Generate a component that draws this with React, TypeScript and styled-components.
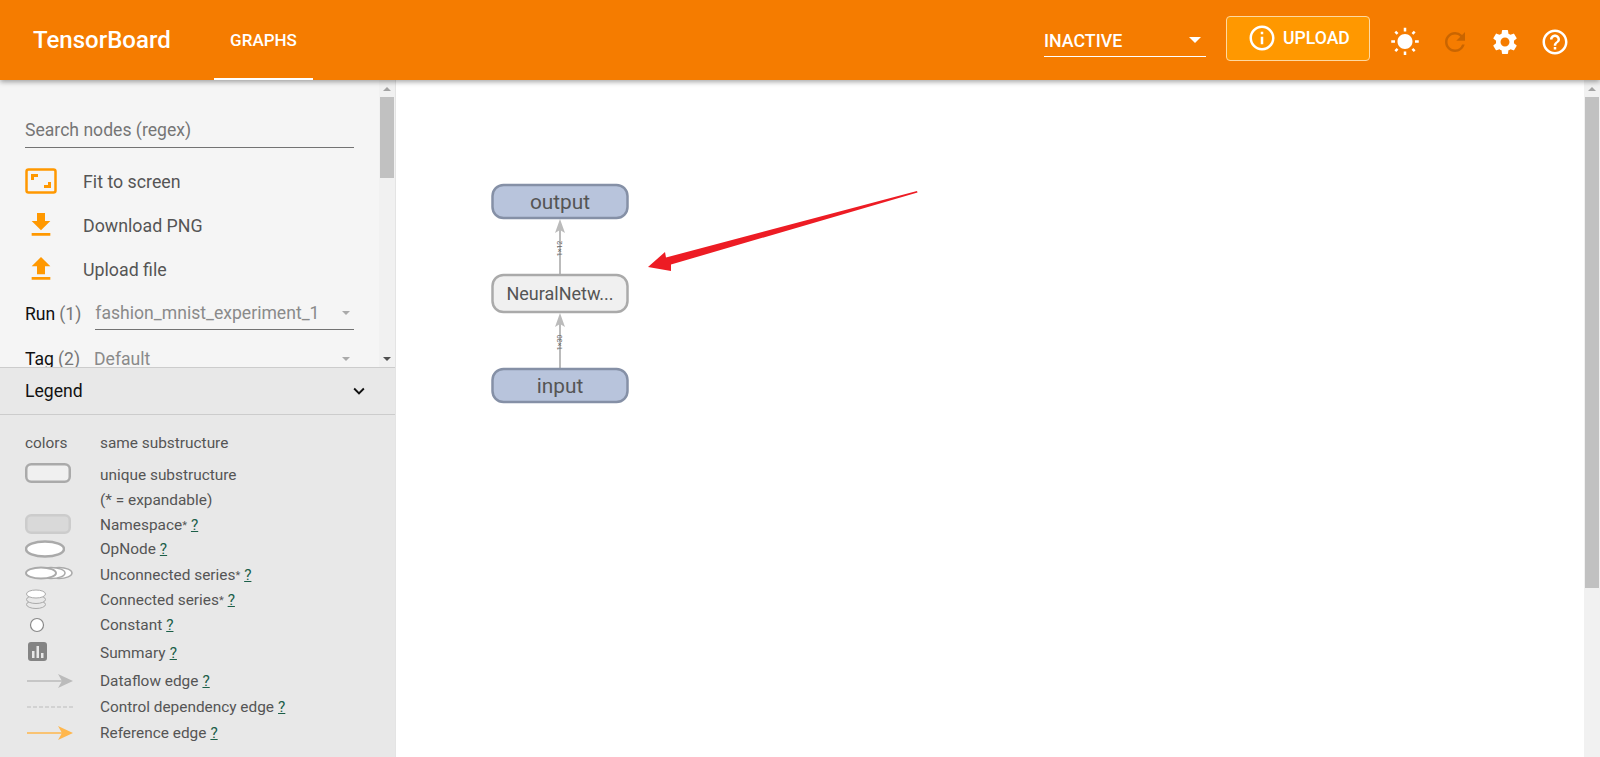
import React from 'react';
import styled, { createGlobalStyle } from 'styled-components';
import {
  MdFileDownload,
  MdFileUpload,
  MdHelpOutline,
  MdInfoOutline,
  MdKeyboardArrowDown,
  MdRefresh,
  MdSettings,
  MdWbSunny,
} from 'react-icons/md';

const GlobalStyle = createGlobalStyle`
  html, body {
    margin: 0;
    height: 100%;
    overflow: hidden;
    background: #fff;
    font-family: Roboto, "Liberation Sans", sans-serif;
  }
`;

const Page = styled.div`
  display: flex;
  flex-direction: column;
  height: 757px;
`;

const Header = styled.header`
  position: relative;
  z-index: 2;
  display: flex;
  align-items: stretch;
  flex: none;
  height: 80px;
  padding-left: 33px;
  background: #f57c00;
  color: #fff;
  box-shadow: 0 2px 5px rgba(0, 0, 0, 0.35);
`;

const Title = styled.div`
  width: 181px;
  font-size: 24px;
  font-weight: 500;
  line-height: 80px;
`;

const Tab = styled.div`
  box-sizing: border-box;
  width: 99px;
  padding-top: 30px;
  border-bottom: 2px solid #fff;
  font-size: 17px;
  font-weight: 500;
  line-height: 20px;
  text-align: center;
`;

const HeaderRight = styled.div`
  display: flex;
  align-items: center;
  margin-left: auto;
  padding-right: 20px;
`;

const RunSelect = styled.div`
  box-sizing: border-box;
  display: flex;
  align-items: center;
  justify-content: space-between;
  width: 162px;
  height: 32px;
  margin: 1px 20px 0 0;
  padding-right: 5px;
  border-bottom: 1px solid #fff;
  font-size: 17.800px;
  font-weight: 500;
`;

const Caret = styled.span<{ $color: string; $size: number }>`
  width: 0;
  height: 0;
  border-left: ${(p) => p.$size}px solid transparent;
  border-right: ${(p) => p.$size}px solid transparent;
  border-top: ${(p) => p.$size}px solid ${(p) => p.$color};
`;

const UploadButton = styled.div`
  box-sizing: border-box;
  display: flex;
  align-items: center;
  gap: 6px;
  width: 144px;
  height: 45px;
  margin: 0 10px 4px 0;
  padding-left: 20px;
  border: 1px solid #ffd9a0;
  border-radius: 4px;
  background: #ff9800;
  font-size: 17.600px;
  font-weight: 500;
`;

const HeaderIcon = styled.span<{ $dim?: boolean }>`
  display: flex;
  justify-content: center;
  width: 50px;
  padding-top: 4px;
  color: ${(p) => (p.$dim ? '#c96500' : '#fff')};
`;

const Body = styled.div`
  display: flex;
  flex: 1;
  min-height: 0;
`;

const Sidebar = styled.aside`
  display: flex;
  flex-direction: column;
  flex: none;
  width: 395px;
  border-right: 1px solid #e4e4e4;
`;

const Controls = styled.div`
  display: flex;
  flex: none;
  height: 287px;
  background: #f5f5f5;
  overflow: hidden;
`;

const ControlsInner = styled.div`
  flex: 1;
  padding: 30px 25px 0;
`;

const Search = styled.div`
  box-sizing: border-box;
  height: 38px;
  padding-top: 9px;
  border-bottom: 1px solid #737373;
  color: #757575;
  font-size: 17.600px;
  line-height: 22px;
`;

const Action = styled.div`
  display: flex;
  align-items: center;
  height: 44px;
  color: #555;
  font-size: 17.800px;
`;

const ActionIcon = styled.span`
  display: flex;
  justify-content: center;
  flex: none;
  width: 32px;
  margin-right: 26px;
  color: #ff9800;
`;

const Actions = styled.div`
  margin-top: 11px;
`;

const SelectRow = styled.div`
  display: flex;
  align-items: center;
  height: 45px;
  font-size: 17.600px;
  color: #111;
`;

const Count = styled.span`
  margin-left: 4px;
  color: #777;
`;

const SelectValue = styled.div<{ $line?: boolean }>`
  box-sizing: border-box;
  display: flex;
  align-items: center;
  justify-content: space-between;
  flex: 1;
  height: 33px;
  margin-left: 14px;
  padding-right: 4px;
  border-bottom: ${(p) => (p.$line ? '1px solid #737373' : 'none')};
  color: #8a8a8a;
`;

const Scrollbar = styled.div`
  display: flex;
  flex-direction: column;
  align-items: center;
  flex: none;
  box-sizing: border-box;
  width: 16px;
  height: 100%;
  padding: 7px 1px 6px;
  background: #f1f1f1;
`;

const Thumb = styled.div<{ $height: number }>`
  flex: none;
  width: 14px;
  height: ${(p) => p.$height}px;
  margin-top: 6px;
  background: #c1c1c1;
`;

const ScrollUp = styled.span`
  flex: none;
  width: 0;
  height: 0;
  border-left: 4px solid transparent;
  border-right: 4px solid transparent;
  border-bottom: 4px solid #a3a3a3;
`;

const ScrollDown = styled.span`
  flex: none;
  width: 0;
  height: 0;
  margin-top: auto;
  border-left: 4px solid transparent;
  border-right: 4px solid transparent;
  border-top: 4px solid #505050;
`;

const LegendHeader = styled.div`
  box-sizing: border-box;
  display: flex;
  align-items: center;
  justify-content: space-between;
  flex: none;
  height: 48px;
  padding: 0 25px;
  border-top: 1px solid #ccc;
  border-bottom: 1px solid #ccc;
  background: #e8e8e8;
  color: #111;
  font-size: 17.600px;
`;

const LegendBody = styled.div`
  flex: 1;
  padding-top: 16px;
  background: #e8e8e8;
`;

const LegendRow = styled.div<{ $extra?: number }>`
  display: flex;
  align-items: center;
  height: 24px;
  margin-bottom: ${(p) => p.$extra ?? 0}px;
  padding-left: 25px;
  color: #555;
  font-size: 15.400px;
  white-space: nowrap;
`;

const LegendIcon = styled.span<{ $lift?: number }>`
  box-sizing: border-box;
  display: flex;
  align-items: center;
  flex: none;
  width: 75px;
  height: 24px;
  padding-bottom: ${(p) => (p.$lift ?? 0) * 2}px;
`;

const Star = styled.span`
  font-size: 11px;
`;

const HelpLink = styled.span`
  margin-left: 4px;
  color: #1b5e48;
  text-decoration: underline;
`;

const Main = styled.main`
  position: relative;
  display: flex;
  flex: 1;
  justify-content: flex-end;
  min-width: 0;
  background: #fff;
`;

const GraphSvg = styled.svg`
  position: absolute;
  top: 0;
  left: 0;
`;

const NodeLabel = styled.text<{ $size: number }>`
  fill: #555;
  font-family: Roboto, sans-serif;
  font-size: ${(p) => p.$size}px;
  text-anchor: middle;
`;

const EdgeLabel = styled.text`
  fill: #666;
  font-family: Roboto, sans-serif;
  font-size: 7px;
  text-anchor: middle;
`;

const GraphNode = ({ y, h, label, meta }: { y: number; h: number; label: string; meta?: boolean }) => (
  <g>
    <rect
      x="96.500"
      y={y}
      width="135"
      height={h}
      rx="11"
      fill={meta ? '#b8c4dc' : '#f0f0f0'}
      stroke={meta ? '#8590a6' : '#aaa'}
      strokeWidth="2.500"
    />
    <NodeLabel $size={meta ? 20.8 : 18} x="164" y={y + h / 2 + (meta ? 7 : 6)}>{label}</NodeLabel>
  </g>
);

const GraphEdge = ({ y1, y2, label }: { y1: number; y2: number; label: string }) => (
  <g>
    <line x1="164" y1={y1} x2="164" y2={y2 + 8} stroke="#bbb" strokeWidth="2" />
    <path d={`M164 ${y2} l5 14 l-5 -3 l-5 3 z`} fill="#bbb" />
    <EdgeLabel transform={`translate(166 ${(y1 + y2) / 2 + 2}) rotate(-90)`}>{label}</EdgeLabel>
  </g>
);

const Graph = () => (
  <GraphSvg width="1188" height="677" viewBox="0 0 1188 677">
    <GraphEdge y1={194} y2={139} label="1×12" />
    <GraphEdge y1={288} y2={233} label="1×30" />
    <GraphNode y={105} h={33} label="output" meta />
    <GraphNode y={195} h={37} label="NeuralNetw..." />
    <GraphNode y={289} h={33} label="input" meta />
    <path d="M252 187 L269 172 L270 177.500 L521 111 L521.500 112.500 L275 184.500 L275 191 Z" fill="#ed1c24" />
  </GraphSvg>
);

const FitIcon = () => (
  <svg width="32" height="26" viewBox="0 0 32 26">
    <rect x="1.500" y="1.500" width="29" height="23" rx="2" fill="none" stroke="#ff9800" strokeWidth="2.500" />
    <path d="M6 6h7v3h-4v3H6zM26 20h-7v-3h4v-3h3z" fill="#ff9800" />
  </svg>
);

const UniqueIcon = () => (
  <svg width="46" height="20" viewBox="0 0 46 20">
    <rect x="1.250" y="1.250" width="43.500" height="17.500" rx="5" fill="#f0f0f0" stroke="#aaa" strokeWidth="2.500" />
  </svg>
);

const NamespaceIcon = () => (
  <svg width="46" height="20" viewBox="0 0 46 20">
    <rect x="1.250" y="1.250" width="43.500" height="17.500" rx="5" fill="#d9d9d9" stroke="#ccc" strokeWidth="2.500" />
  </svg>
);

const OpIcon = () => (
  <svg width="40" height="18" viewBox="0 0 40 18">
    <ellipse cx="20" cy="9" rx="19" ry="7.500" fill="#fff" stroke="#aaa" strokeWidth="2.500" />
  </svg>
);

const SeriesIcon = () => (
  <svg width="48" height="14" viewBox="0 0 48 14">
    <ellipse cx="34" cy="7" rx="13" ry="5.500" fill="#fff" stroke="#aaa" strokeWidth="1.500" />
    <ellipse cx="26" cy="7" rx="14" ry="5.500" fill="#fff" stroke="#aaa" strokeWidth="1.500" />
    <ellipse cx="16" cy="7" rx="15" ry="5.500" fill="#fff" stroke="#aaa" strokeWidth="2" />
  </svg>
);

const ConnectedIcon = () => (
  <svg width="22" height="21" viewBox="0 0 22 21">
    <ellipse cx="11" cy="15.500" rx="9.500" ry="4" fill="#e8e8e8" stroke="#aaa" />
    <ellipse cx="11" cy="10.500" rx="9.500" ry="4" fill="#e8e8e8" stroke="#aaa" />
    <ellipse cx="11" cy="5" rx="9.500" ry="4" fill="#fff" stroke="#aaa" />
  </svg>
);

const ConstantIcon = () => (
  <svg width="24" height="16" viewBox="0 0 24 16">
    <circle cx="12" cy="8" r="6.500" fill="#fff" stroke="#888" strokeWidth="1.200" />
  </svg>
);

const SummaryIcon = () => (
  <svg width="24" height="20" viewBox="0 0 24 20">
    <rect x="3" y="0" width="19" height="19" rx="3" fill="#848484" />
    <path d="M7 9h2.500v7H7zM11.500 4H14v12h-2.500zM16 11h2.500v5H16z" fill="#e8e8e8" />
  </svg>
);

const ArrowIcon = ({ color }: { color: string }) => (
  <svg width="50" height="16" viewBox="0 0 50 16">
    <line x1="2" y1="8" x2="40" y2="8" stroke={color} strokeWidth="1.500" />
    <path d="M48 8 L33 1 L37 8 L33 15 Z" fill={color} />
  </svg>
);

const DashedIcon = () => (
  <svg width="50" height="4" viewBox="0 0 50 4">
    <line x1="2" y1="2" x2="48" y2="2" stroke="#bbb" strokeWidth="1.200" strokeDasharray="4 2" />
  </svg>
);

const legendRows: {
  icon?: React.ReactNode;
  label: string;
  star?: boolean;
  help?: boolean;
  extra?: number;
  lift?: number;
}[] = [
  { label: 'same substructure', extra: 8 },
  { icon: <UniqueIcon />, label: 'unique substructure', extra: 1, lift: 2 },
  { label: '(* = expandable)', extra: 1 },
  { icon: <NamespaceIcon />, label: 'Namespace', star: true, help: true, lift: 1 },
  { icon: <OpIcon />, label: 'OpNode', help: true, extra: 2 },
  { icon: <SeriesIcon />, label: 'Unconnected series', star: true, help: true, extra: 1, lift: 2 },
  { icon: <ConnectedIcon />, label: 'Connected series', star: true, help: true, extra: 1, lift: 1 },
  { icon: <ConstantIcon />, label: 'Constant', help: true, extra: 4 },
  { icon: <SummaryIcon />, label: 'Summary', help: true, extra: 4, lift: 1 },
  { icon: <ArrowIcon color="#bbb" />, label: 'Dataflow edge', help: true, extra: 2 },
  { icon: <DashedIcon />, label: 'Control dependency edge', help: true, extra: 2 },
  { icon: <ArrowIcon color="#ffb74d" />, label: 'Reference edge', help: true },
];

const App = () => {
  return (
    <Page>
      <GlobalStyle />
      <Header>
        <Title>TensorBoard</Title>
        <Tab>GRAPHS</Tab>
        <HeaderRight>
          <RunSelect>
            INACTIVE
            <Caret $color="#fff" $size={6} />
          </RunSelect>
          <UploadButton>
            <MdInfoOutline size={30} />
            UPLOAD
          </UploadButton>
          <HeaderIcon><MdWbSunny size={30} /></HeaderIcon>
          <HeaderIcon $dim><MdRefresh size={30} /></HeaderIcon>
          <HeaderIcon><MdSettings size={30} /></HeaderIcon>
          <HeaderIcon><MdHelpOutline size={30} /></HeaderIcon>
        </HeaderRight>
      </Header>
      <Body>
        <Sidebar>
          <Controls>
            <ControlsInner>
              <Search>Search nodes (regex)</Search>
              <Actions>
                <Action>
                  <ActionIcon><FitIcon /></ActionIcon>
                  Fit to screen
                </Action>
                <Action>
                  <ActionIcon><MdFileDownload size={32} /></ActionIcon>
                  Download PNG
                </Action>
                <Action>
                  <ActionIcon><MdFileUpload size={32} /></ActionIcon>
                  Upload file
                </Action>
              </Actions>
              <SelectRow>
                Run<Count>(1)</Count>
                <SelectValue $line>
                  fashion_mnist_experiment_1
                  <Caret $color="#aaa" $size={4} />
                </SelectValue>
              </SelectRow>
              <SelectRow>
                Tag<Count>(2)</Count>
                <SelectValue>
                  Default
                  <Caret $color="#aaa" $size={4} />
                </SelectValue>
              </SelectRow>
            </ControlsInner>
            <Scrollbar>
              <ScrollUp />
              <Thumb $height={81} />
              <ScrollDown />
            </Scrollbar>
          </Controls>
          <LegendHeader>
            Legend
            <MdKeyboardArrowDown size={22} />
          </LegendHeader>
          <LegendBody>
            {legendRows.map((row, i) => (
              <LegendRow key={row.label} $extra={row.extra}>
                <LegendIcon $lift={row.lift}>{i === 0 ? 'colors' : row.icon}</LegendIcon>
                {row.label}
                {row.star && <Star>*</Star>}
                {row.help && <HelpLink>?</HelpLink>}
              </LegendRow>
            ))}
          </LegendBody>
        </Sidebar>
        <Main>
          <Graph />
          <Scrollbar>
            <ScrollUp />
            <Thumb $height={491} />
          </Scrollbar>
        </Main>
      </Body>
    </Page>
  );
};

export default App;
